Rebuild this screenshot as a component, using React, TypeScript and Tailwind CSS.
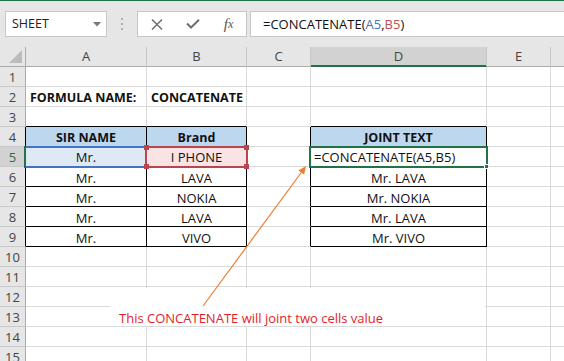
import React from "react";

type CellData = { t: string; bold?: boolean; left?: boolean; fill?: string };

const cols = [
  { key: "A", w: "w-[121px]" },
  { key: "B", w: "w-[100px]" },
  { key: "C", w: "w-[64px]" },
  { key: "D", w: "w-[176px]" },
  { key: "E", w: "w-[64px]" },
  { key: "F", w: "w-[40px]" },
];

const head = "bg-[#bdd7ee]";

const data: Record<number, Record<string, CellData>> = {
  2: {
    A: { t: "FORMULA NAME:", bold: true, left: true },
    B: { t: "CONCATENATE", bold: true, left: true },
  },
  4: {
    A: { t: "SIR NAME", bold: true, fill: head },
    B: { t: "Brand", bold: true, fill: head },
    D: { t: "JOINT TEXT", bold: true, fill: head },
  },
  5: { A: { t: "Mr." }, B: { t: "I PHONE" }, D: { t: "=CONCATENATE(A5,B5)", left: true } },
  6: { A: { t: "Mr." }, B: { t: "LAVA" }, D: { t: "Mr. LAVA" } },
  7: { A: { t: "Mr." }, B: { t: "NOKIA" }, D: { t: "Mr. NOKIA" } },
  8: { A: { t: "Mr." }, B: { t: "LAVA" }, D: { t: "Mr. LAVA" } },
  9: { A: { t: "Mr." }, B: { t: "VIVO" }, D: { t: "Mr. VIVO" } },
};

const rows = Array.from({ length: 15 }, (_, i) => i + 1);

function Cell({ row, col, w }: { row: number; col: string; w: string }) {
  const inRows = row >= 4 && row <= 9;
  const rightBlack = inRows && ["A", "B", "C", "D"].includes(col);
  const bottomBlack = row >= 3 && row <= 9 && ["A", "B", "D"].includes(col);
  const cell = data[row]?.[col];

  return (
    <div
      className={`${w} h-[20px] shrink-0 border-r border-b flex items-end leading-4 text-[#111] whitespace-nowrap ${
        rightBlack ? "border-r-black" : "border-r-[#dadada]"
      } ${bottomBlack ? "border-b-black" : "border-b-[#dadada]"} ${cell?.fill ?? ""} ${
        cell?.left ? "justify-start pl-[4px]" : "justify-center"
      } ${cell?.bold ? "font-bold text-[12.5px]" : "text-[13px]"}`}
    >
      {cell?.t}
    </div>
  );
}

function RowHeader({ row }: { row: number }) {
  const active = row === 5;
  const dark = row >= 4 && row <= 9;
  return (
    <div
      className={`w-[26px] h-[20px] shrink-0 border-r border-b border-b-[#c8c8c8] flex items-end justify-center pb-px leading-4 text-[13px] ${
        active
          ? "bg-[#d2d2d2] text-[#217346] border-r-[#217346] shadow-[inset_-1px_0_0_#217346]"
          : "bg-[#e6e6e6] text-[#444]"
      } ${!active && dark ? "border-r-black" : ""} ${!active && !dark ? "border-r-[#ababab]" : ""}`}
    >
      {row}
    </div>
  );
}

function Toolbar() {
  return (
    <div className="h-[46px] bg-[#e6e6e6] flex items-start pt-[10px]">
      <div className="ml-[5px] w-[102px] h-[26px] bg-white border border-[#c6c6c6] flex items-center justify-between pl-[6px] pr-[5px] text-[12.5px] text-[#222]">
        <span>SHEET</span>
        <svg width="8" height="5" viewBox="0 0 8 5">
          <path d="M0 0 H8 L4 4.5 Z" fill="#777" />
        </svg>
      </div>
      <div className="w-[30px] h-[26px] flex flex-col items-center justify-center gap-[3px]">
        <span className="w-[2px] h-[2px] bg-[#b0b0b0]" />
        <span className="w-[2px] h-[2px] bg-[#b0b0b0]" />
        <span className="w-[2px] h-[2px] bg-[#b0b0b0]" />
      </div>
      <div className="w-[110px] h-[26px] bg-white border border-[#c6c6c6] flex items-center">
        <div className="w-[37px] flex justify-center pl-[1px]">
          <svg width="12" height="11" viewBox="0 0 12 11">
            <path d="M1 0.5 L11 10.5 M11 0.5 L1 10.5" stroke="#6f6f6f" strokeWidth="1.5" />
          </svg>
        </div>
        <div className="w-[36px] flex justify-center">
          <svg width="14" height="10" viewBox="0 0 14 10">
            <path d="M1 4.5 L5 8.5 L13 0.8" stroke="#6f6f6f" strokeWidth="2" fill="none" />
          </svg>
        </div>
        <div className="w-[35px] flex justify-center font-['Liberation_Serif',serif] italic text-[15px] leading-4 text-[#555]">
          f<span className="text-[12px]">x</span>
        </div>
      </div>
      <div className="ml-[3px] flex-1 h-[26px] bg-white border border-[#c6c6c6] -mr-[2px] flex items-center pl-[12px] text-[13px] leading-4 text-[#111]">
        =CONCATENATE(<span className="text-[#4472c4]">A5</span>,<span className="text-[#c0504d]">B5</span>)
      </div>
    </div>
  );
}

function ColumnHeaders() {
  return (
    <div className="flex h-[20px] text-[13px] leading-4 text-[#444]">
      <div className="w-[26px] h-[20px] shrink-0 bg-[#e6e6e6] border-r border-b border-r-[#ababab] border-b-[#ababab] relative">
        <svg className="absolute left-[9px] top-[3px]" width="14" height="14" viewBox="0 0 14 14">
          <path d="M13 0 V13 H0 Z" fill="#bcbcbc" />
        </svg>
      </div>
      {cols.map((c) => (
        <div
          key={c.key}
          className={`${c.w} h-[20px] shrink-0 border-r border-b border-r-[#c6c6c6] flex items-end justify-center pb-[2px] ${
            c.key === "D"
              ? "bg-[#d2d2d2] border-b-[#217346] shadow-[inset_0_-1px_0_#217346]"
              : "bg-[#e6e6e6] border-b-[#ababab]"
          }`}
        >
          {c.key === "F" ? "" : c.key}
        </div>
      ))}
    </div>
  );
}

export default function App() {
  return (
    <div className="w-[564px] h-[361px] overflow-hidden bg-white relative font-['Open_Sans',sans-serif]">
      <div className="h-px bg-[#217346]" />
      <Toolbar />
      <ColumnHeaders />
      <div className="relative">
        {rows.map((r) => (
          <div key={r} className="flex">
            <RowHeader row={r} />
            {cols.map((c) => (
              <Cell key={c.key} row={r} col={c.key} w={c.w} />
            ))}
          </div>
        ))}

        {/* reference highlight on A5 */}
        <div className="absolute left-[25px] top-[79px] w-[122px] h-[22px] border-y-2 border-[#4472c4] bg-[#dfe8f5] flex items-end justify-center text-[13px] leading-4 text-[#111] pb-[1px]">
          Mr.
        </div>
        <div className="absolute left-[24px] top-[79px] w-[2px] h-[22px] bg-[#217346]" />

        {/* reference highlight on B5 */}
        <div className="absolute left-[145px] top-[79px] w-[103px] h-[22px] border-2 border-[#b9454f] bg-[#f9e3e4] flex items-end justify-center text-[13px] leading-4 text-[#111] pb-[1px]">
          I PHONE
          <span className="absolute -left-[3px] -top-[3px] w-[5px] h-[5px] bg-[#b9454f]" />
          <span className="absolute -right-[3px] -top-[3px] w-[5px] h-[5px] bg-[#b9454f]" />
          <span className="absolute -left-[3px] -bottom-[3px] w-[5px] h-[5px] bg-[#b9454f]" />
          <span className="absolute -right-[3px] -bottom-[3px] w-[5px] h-[5px] bg-[#b9454f]" />
        </div>

        {/* active cell D5 */}
        <div className="absolute left-[309px] top-[79px] w-[179px] h-[22px] border-2 border-[#217346] bg-white flex items-end pl-[3px] pb-[1px] text-[13px] leading-4 text-[#111] whitespace-nowrap">
          =CONCATENATE(A5,B5)
          <span className="absolute -right-[3px] -bottom-[3px] w-[5px] h-[5px] bg-[#217346] border border-white" />
        </div>

        {/* note text box */}
        <div className="absolute left-[110px] top-[221px] w-[375px] h-[38px] bg-white flex items-end pl-[9px] text-[13px] leading-4 text-[#e01e2b] whitespace-nowrap">
          This CONCATENATE will joint two cells value
        </div>
      </div>

      <svg className="absolute left-0 top-0 pointer-events-none" width="564" height="361" viewBox="0 0 564 361">
        <line x1="203" y1="306" x2="301.3" y2="172.5" stroke="#ed7d31" strokeWidth="1.2" />
        <polygon points="306,166 304.1,174.5 298.4,170.4" fill="#ed7d31" />
      </svg>
    </div>
  );
}
